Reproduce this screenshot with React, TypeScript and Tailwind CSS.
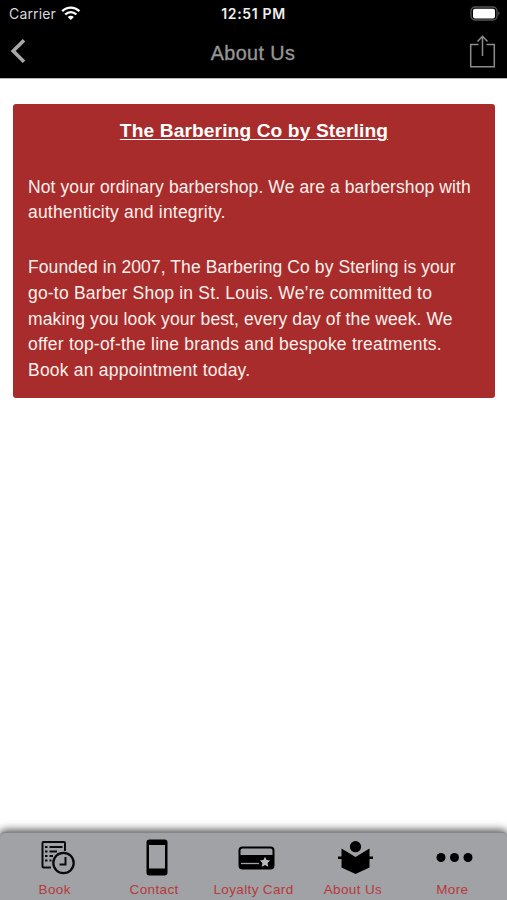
import type { ReactNode } from "react";

function StatusBar() {
  return (
    <div className="grid h-7 grid-cols-3 items-center px-[9px] text-white">
      <div className="flex items-center gap-[5px]">
        <span className="font-[Inter,sans-serif] text-[14px] leading-7 tracking-[0.15px] text-[#d8d8d8]">Carrier</span>
        <svg width="20" height="15" viewBox="0 0 20 15" fill="none" stroke="white" strokeWidth="2.4" className="mt-[-2px]">
          <path d="M1.2 5.2C6.2 .4 13.4 .4 18.4 5.2" />
          <path d="M4.2 8.5C7.5 5.4 12.1 5.4 15.4 8.5" />
          <path d="M9.8 14L6.7 10.9C8.6 9.3 11 9.3 12.9 10.9Z" fill="white" stroke="none" />
        </svg>
      </div>
      <span className="text-center font-[Inter,sans-serif] text-[14px] leading-7 font-semibold tracking-[0.65px] whitespace-nowrap text-[#eeeeee]">12:51 PM</span>
      <svg width="31" height="15" viewBox="0 0 31 15" className="mr-[-3px] justify-self-end mt-[-2px]">
        <rect x="1" y="1" width="26" height="13" rx="4" fill="none" stroke="#555" strokeWidth="1.3" />
        <rect x="3" y="2.8" width="22" height="9.6" rx="2" fill="white" />
        <path d="M28.5 5.3Q30.4 7.5 28.5 9.7Z" fill="#777" />
      </svg>
    </div>
  );
}

function NavBar() {
  return (
    <div className="flex h-[50px] items-center justify-between pr-[11px] pl-[10px]">
      <svg width="28" height="26" viewBox="0 0 28 26" fill="none" className="mb-[5px]">
        <path d="M14 2.2L3.2 13L14 23.8" stroke="#a8a8a8" strokeWidth="3.6" />
      </svg>
      <h1 className="text-[19.8px] leading-[50px] tracking-[0.4px] text-[#969696] [-webkit-text-stroke:0.35px_#969696]">About Us</h1>
      <svg width="28" height="34" viewBox="0 0 28 34" fill="none" stroke="#8c8c8c" strokeWidth="1.5" className="mb-[3px]">
        <path d="M10.5 9.5H2.7V31.8H26.3V9.5H18.5M14.5 21V1.5M9.5 6.5L14.5 1.3L19.5 6.5" />
      </svg>
    </div>
  );
}

function Tab({ label, children }: { label: string; children: ReactNode }) {
  return (
    <div className="flex flex-1 flex-col items-center">
      <svg width="40" height="40" viewBox="0 0 40 40" className="mt-[5px] overflow-visible">{children}</svg>
      <span className="mt-[4px] text-[13.5px] leading-[16px] tracking-[0.35px] whitespace-nowrap text-[#b9383b]">{label}</span>
    </div>
  );
}

export default function App() {
  return (
    <div className="flex h-[900px] w-[507px] flex-col overflow-hidden bg-white font-['Liberation_Sans',Arial,sans-serif]">
      <header className="h-[79px] shrink-0 border-b border-[#b5b5b5] bg-black">
        <StatusBar />
        <NavBar />
      </header>
      <main className="flex-1 px-[13px] pt-[24.5px]">
        <section className="h-[294px] w-[482px] rounded-[3px] bg-[#a82c2b] px-[15px] pt-[13px] text-[#fff0ec]">
          <h2 className="text-center text-[19.2px] leading-[28px] font-bold tracking-[0.1px] whitespace-nowrap text-white underline decoration-1 underline-offset-[2px]">The Barbering Co by Sterling</h2>
          <div className="mt-[30px] text-[17.5px] leading-[25.7px] whitespace-nowrap">
            <p>
              <span className="tracking-[0.1px]">Not your ordinary barbershop. We are a barbershop with</span><br />
              <span className="tracking-[0.2px]">authenticity and integrity.</span>
            </p>
            <p className="mt-[29.3px]">
              <span className="tracking-[0.09px]">Founded in 2007, The Barbering Co by Sterling is your</span><br />
              <span className="tracking-[0.19px]">go-to Barber Shop in St. Louis. We’re committed to</span><br />
              <span className="tracking-[0.11px]">making you look your best, every day of the week. We</span><br />
              <span className="tracking-[0.22px]">offer top-of-the line brands and bespoke treatments.</span><br />
              <span className="tracking-[0.22px]">Book an appointment today.</span>
            </p>
          </div>
        </section>
      </main>
      <nav className="flex h-[68px] shrink-0 rounded-t-[5px] border-t border-[#85868a] bg-[#a0a2a6] px-[5px] shadow-[0_-1px_8px_1px_rgba(0,0,0,0.7)]">
        <Tab label="Book">
          <g fill="none" stroke="#090a0c" strokeWidth="2">
            <path d="M16 29.5H8.5Q7.5 29.5 7.5 28.5V5Q7.5 4 8.5 4H29Q30 4 30 5V13" />
            <path d="M10 9H12.5M10 13.5H12.5M10 18H12.5M10 22.5H12.5M14.5 9H27.5M14.5 13.5H22M14.5 18H18M14.5 22.5H16.5" strokeWidth="1.9" />
            <circle cx="28.5" cy="25" r="10.2" strokeWidth="2.3" />
            <path d="M30.5 19V26.5H24.5" />
          </g>
        </Tab>
        <Tab label="Contact">
          <path fillRule="evenodd" d="M15.5 1.5H30.5Q33.5 1.5 33.5 4.5V34.5Q33.5 37.5 30.5 37.5H15.5Q12.5 37.5 12.5 34.5V4.5Q12.5 1.5 15.5 1.5ZM15 7V30.5H31V7Z" />
        </Tab>
        <Tab label="Loyalty Card">
          <rect x="5.5" y="9.5" width="34" height="21" rx="3" fill="none" stroke="black" strokeWidth="2" />
          <path d="M5 17H40V28Q40 31 37 31H8Q5 31 5 28Z" />
          <path d="M7 25.5H25" stroke="#a0a2a6" strokeWidth="1.3" />
          <path d="M31 18.8L32.6 22.1L36.1 22.6L33.6 25.1L34.2 28.7L31 27L27.8 28.7L28.4 25.1L25.9 22.6L29.4 22.1Z" fill="#b9bbbd" />
        </Tab>
        <Tab label="About Us">
          <circle cx="22.5" cy="8.7" r="5.6" />
          <path d="M8.5 10.5L22.5 19L36.5 10.5V18.5H40V21H36.5V29.5L22.5 36L8.5 29.5V21H5V18.5H8.5Z" />
        </Tab>
        <Tab label="More">
          <circle cx="9" cy="19.5" r="4.5" />
          <circle cx="22.5" cy="19.5" r="4.5" />
          <circle cx="36" cy="19.5" r="4.5" />
        </Tab>
      </nav>
    </div>
  );
}
